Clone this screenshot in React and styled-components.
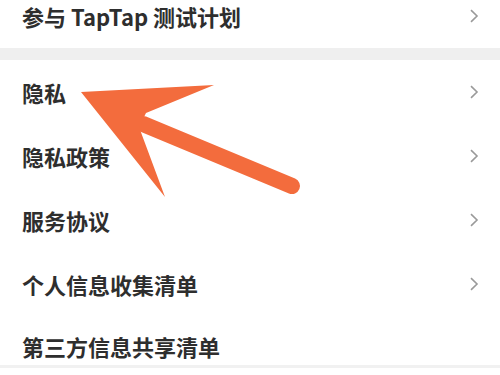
import styled, { createGlobalStyle } from "styled-components";

const GlobalStyle = createGlobalStyle`
  html, body {
    margin: 0;
    padding: 0;
    background: #ffffff;
  }
  body {
    font-family: "Noto Sans CJK SC", "Noto Sans", sans-serif;
    overflow: hidden;
  }
`;

const ACCENT = "#f36c3d";

const Page = styled.div`
  position: relative;
  width: 500px;
  height: 375px;
  overflow: hidden;
  background: #ffffff;
`;

const Section = styled.div`
  display: flex;
  flex-direction: column;
  margin-top: ${(p) => (p.$first ? "-16px" : "0")};
`;

const Separator = styled.div`
  height: 12px;
  background: #efefef;
`;

const Row = styled.div`
  display: flex;
  align-items: center;
  justify-content: space-between;
  height: ${(p) => (p.$last ? "52px" : "64px")};
  padding: ${(p) => (p.$last ? "10px 22px 0" : "0 22px")};
  box-sizing: border-box;
  border-bottom: ${(p) => (p.$last ? "3px solid #f1f1f1" : "none")};
`;

const Label = styled.span`
  font-size: 22px;
  font-weight: 700;
  color: #2e2e2e;
`;

const Chevron = styled.svg`
  width: 10px;
  height: 14px;
  margin-right: -1px;
  flex-shrink: 0;
`;

const Pointer = styled.svg`
  position: absolute;
  left: 0;
  top: 0;
  pointer-events: none;
`;

const Arrow = () => (
  <Chevron viewBox="0 0 10 14" fill="none">
    <path d="M2 1.2 L8 7 L2 12.8" stroke="#9a9a9a" strokeWidth="1.6" />
  </Chevron>
);

const Item = ({ label, last, noArrow }) => (
  <Row $last={last}>
    <Label>{label}</Label>
    {!noArrow && <Arrow />}
  </Row>
);

const App = () => {
  return (
    <Page>
      <GlobalStyle />
      <Section $first>
        <Item label="参与 TapTap 测试计划" />
      </Section>
      <Separator />
      <Section>
        <Item label="隐私" />
        <Item label="隐私政策" />
        <Item label="服务协议" />
        <Item label="个人信息收集清单" />
        <Item label="第三方信息共享清单" last noArrow />
      </Section>
      {/* annotation arrow drawn over the list */}
      <Pointer width="500" height="375" viewBox="0 0 500 375">
        <line
          x1="143"
          y1="124"
          x2="292"
          y2="186"
          stroke={ACCENT}
          strokeWidth="16"
          strokeLinecap="round"
        />
        <polygon
          points="81,92 214,85 146,113 139,127 165,197"
          fill={ACCENT}
        />
      </Pointer>
    </Page>
  );
};

export default App;
